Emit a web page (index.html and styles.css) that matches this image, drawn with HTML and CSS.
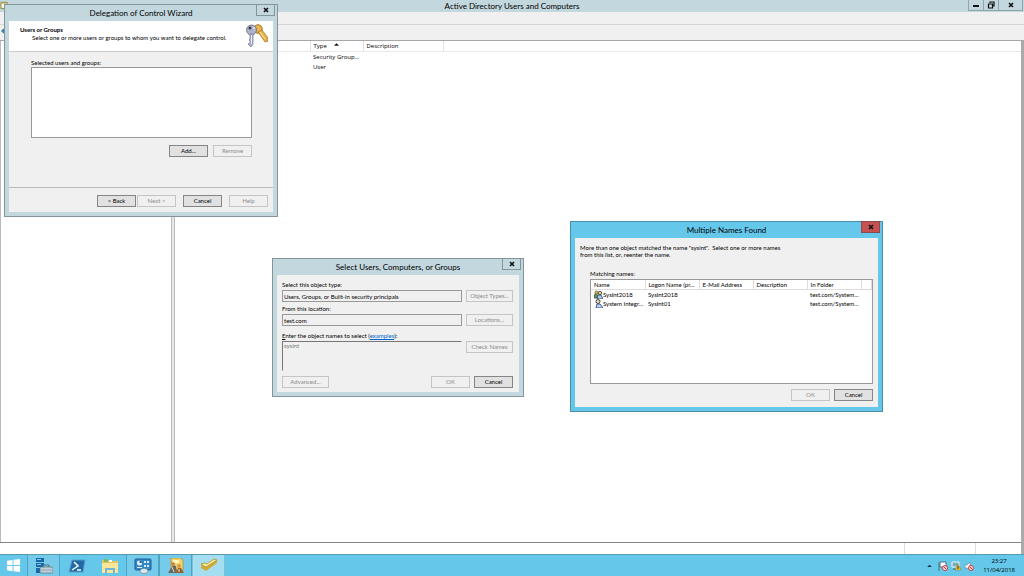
FILE: index.html
```html
<!DOCTYPE html>
<html lang="en">
<head>
<meta charset="utf-8">
<title>Active Directory Users and Computers</title>
<link rel="stylesheet" href="styles.css">
</head>
<body>
<div class="desktop">
  <main class="console">
    <header class="console-title">
      <svg class="app-icon" viewBox="0 0 10 10" aria-hidden="true"><path d="M1 2h7v7H1z" fill="#d8cc7a" stroke="#8f8b4e"/><path d="M2 4h5v4H2z" fill="#fff"/></svg>
      <h1>Active Directory Users and Computers</h1>
      <div class="caption-buttons">
        <button type="button" aria-label="Minimize"><svg viewBox="0 0 10 10"><path d="M2 6h6" stroke="#111" stroke-width="2"/></svg></button>
        <button type="button" aria-label="Restore"><svg viewBox="0 0 10 10"><path d="M4 3V2h4v4H7M2.500 4h4v4h-4z" fill="none" stroke="#111" stroke-width="1.200"/></svg></button>
        <button type="button" class="wide" aria-label="Close"><svg viewBox="0 0 10 10"><path d="M3 3l4 4M7 3L3 7" stroke="#111" stroke-width="1.600"/></svg></button>
      </div>
    </header>
    <div class="menubar"></div>
    <div class="toolbar"><svg class="back-icon" viewBox="0 0 8 8" aria-hidden="true"><path d="M7 4H2M4 2L2 4l2 2" fill="none" stroke="#3f87a8" stroke-width="1.500"/></svg></div>
    <div class="panes">
      <nav class="tree" aria-label="Console tree"></nav>
      <section class="listing">
        <table class="objects">
          <colgroup><col class="c-name"><col class="c-type"><col class="c-desc"><col></colgroup>
          <thead><tr><th></th><th>Type<svg class="sort" viewBox="0 0 6 3" aria-hidden="true"><path d="M0 3l3-3 3 3z" fill="#111"/></svg></th><th>Description</th><th></th></tr></thead>
          <tbody>
            <tr><td></td><td>Security Group...</td><td></td><td></td></tr>
            <tr><td></td><td>User</td><td></td><td></td></tr>
          </tbody>
        </table>
      </section>
    </div>
    <footer class="statusbar"><span class="grow"></span><span class="cell-a"></span><span class="cell-b"></span></footer>
  </main>

  <nav class="taskbar" aria-label="Taskbar">
    <button type="button" class="start" aria-label="Start"><svg viewBox="0 0 16 16"><path d="M1 3l6-1v5.500H1zM8 1.900L15 1v6.500H8zM1 8.500h6V14l-6-1zM8 8.500h7V15l-7-.9z" fill="#fff"/></svg></button>
    <button type="button" class="task open" aria-label="Server Manager"><svg viewBox="0 0 18 16"><path d="M1 0h8v4H1zM1 5h8v4H1zM1 10h5v5H1z" fill="#1668a6"/><path d="M2 1h4v1H2zM2 6h4v1H2z" fill="#8cc6ea"/><path d="M8 9V7h6v2" fill="none" stroke="#58707d"/><rect x="5" y="9" width="13" height="6" rx="1" fill="#c3d2da" stroke="#58707d" stroke-width=".7"/><path d="M5 12h13" stroke="#8fa3ae"/></svg></button>
    <button type="button" class="task" aria-label="PowerShell"><svg viewBox="0 0 18 16"><path d="M4 2h13l-2 12H1z" fill="#226aa4" stroke="#5ba0ca"/><path d="M6 4l4 4-6 4M9 12h4" fill="none" stroke="#fff" stroke-width="1.500"/></svg></button>
    <button type="button" class="task" aria-label="File Explorer"><svg viewBox="0 0 18 16"><path d="M1 2h6l1 1h9v12H1z" fill="#e3c45f"/><path d="M3 1h4v3H3z" fill="#7eb963"/><path d="M8 2h3v2H8z" fill="#fff"/><path d="M1 5h16v10H1z" fill="#f8e69b"/><path d="M5 15v-4h8v4" fill="none" stroke="#76b5d4" stroke-width="2"/></svg></button>
    <button type="button" class="task open" aria-label="Control Panel"><svg viewBox="0 0 18 16"><rect x="1" y="1" width="16" height="11" rx="1" fill="#3588c4" stroke="#185f96"/><circle cx="5.500" cy="5" r="2.500" fill="#e6f4fc"/><path d="M5.500 5V2.500A2.500 2.500 0 018 5z" fill="#2569a0"/><path d="M10 3h2v2h-2zM13 3h2v2h-2zM10 7h2v2h-2zM13 7h2v2h-2zM3 9h5v1H3z" fill="#d1edfb"/><ellipse cx="10" cy="13" rx="4" ry="2.500" fill="#e2e8e8" stroke="#68889a" stroke-width=".7"/></svg></button>
    <button type="button" class="task open" aria-label="Active Directory"><svg viewBox="0 0 18 16"><path d="M4 0h10l2 3v9H4z" fill="#f2d568" stroke="#a98b2e" stroke-width=".7"/><path d="M6 2h6v3H6z" fill="#fff5bd"/><path d="M1 15l3-5 2-3 3 1 1 7z" fill="#6e6758"/><circle cx="6" cy="6" r="2" fill="#c58c4f"/><circle cx="12" cy="8" r="2" fill="#d49a55"/><path d="M9 15l2-5h3l3 5z" fill="#9b5f27"/><path d="M5 9l2 5M12 11v3" stroke="#e8e2d0"/></svg></button>
    <button type="button" class="task current" aria-label="Directory Console"><svg viewBox="0 0 18 16"><path d="M1 7l5 2 11-7v3L6 13l-5-3z" fill="#d1ac32"/><path d="M1 6l4-1 2 1 7-5 3 1L6 9z" fill="#fff19c" stroke="#b28c29" stroke-width=".8"/></svg></button>
    <div class="tray">
      <svg class="tray-up" viewBox="0 0 6 4" aria-hidden="true"><path d="M0 4l3-3 3 3z" fill="#122e3c"/></svg>
      <svg class="tray-icon" viewBox="0 0 10 10" aria-label="Action Center"><path d="M1 1v9M2 1h6v5H2z" fill="#fff" stroke="#53727f"/><circle cx="7" cy="7" r="2.500" fill="#f4dede" stroke="#d23c3c"/><path d="M5.500 5.500l3 3" stroke="#d23c3c"/></svg>
      <svg class="tray-icon" viewBox="0 0 10 10" aria-label="Network"><path d="M1 1h7v5H1z" fill="#7bacbc" stroke="#eef8fb"/><path d="M2 8h5" stroke="#48626e"/><path d="M7 3l3 6H4z" fill="#f3ca36" stroke="#957018" stroke-width=".5"/><path d="M7 5v3" stroke="#332b10"/></svg>
      <svg class="tray-icon" viewBox="0 0 10 10" aria-label="Volume"><path d="M1 4h2l3-3v8L3 7H1z" fill="#fff" stroke="#65808a" stroke-width=".6"/><circle cx="7" cy="7" r="2.500" fill="#f4dede" stroke="#d23c3c"/><path d="M5.500 5.500l3 3" stroke="#d23c3c"/></svg>
      <div class="clock"><time>23:27</time><time>11/04/2018</time></div>
    </div>
  </nav>

  <section class="window wizard" role="dialog" aria-labelledby="wizard-title">
    <header class="window-title"><h2 id="wizard-title">Delegation of Control Wizard</h2><button type="button" class="close" aria-label="Close"><svg viewBox="0 0 10 10"><path d="M3 3l4 4M7 3L3 7" stroke="#111" stroke-width="1.600"/></svg></button></header>
    <div class="window-body">
      <div class="banner">
        <div class="banner-text"><h3>Users or Groups</h3><p>Select one or more users or groups to whom you want to delegate control.</p></div>
        <svg class="keys" viewBox="0 0 22 24" aria-hidden="true"><circle cx="12" cy="5" r="4.200" fill="#eab74c" stroke="#a46e20"/><path d="M12 8l7 10 3-1-1-2 1-1-6-8z" fill="#e7b349" stroke="#a46e20" stroke-width=".7"/><path d="M14 8l5 7" stroke="#fae6a1"/><circle cx="5.500" cy="6" r="5" fill="#aeb3ca" stroke="#646982" stroke-width=".8"/><circle cx="4" cy="4" r="1.500" fill="#33374b"/><circle cx="8" cy="4" r="1" fill="#eceffb"/><path d="M4 10h3v10l-2 3-1-1-2-2 2-1v-2l-1-1 1-1z" fill="#afb5d0" stroke="#6d738f" stroke-width=".7"/><path d="M5.500 11v9" stroke="#eef0fa"/></svg>
      </div>
      <div class="wizard-page">
        <label for="selected">Selected users and groups:</label>
        <select id="selected" class="selected" size="4"></select>
        <div class="actions"><button type="button" class="btn">Add...</button><button type="button" class="btn" disabled>Remove</button></div>
      </div>
      <footer class="wizard-footer">
        <div class="pair"><button type="button" class="btn">&lt; Back</button><button type="button" class="btn" disabled>Next &gt;</button></div>
        <button type="button" class="btn">Cancel</button>
        <button type="button" class="btn" disabled>Help</button>
      </footer>
    </div>
  </section>

  <section class="window picker" role="dialog" aria-labelledby="picker-title">
    <header class="window-title"><h2 id="picker-title">Select Users, Computers, or Groups</h2><button type="button" class="close" aria-label="Close"><svg viewBox="0 0 10 10"><path d="M3 3l4 4M7 3L3 7" stroke="#111" stroke-width="1.600"/></svg></button></header>
    <form class="window-body picker-form">
      <div class="field"><label for="otype">Select this object type:</label><input id="otype" class="text" type="text" readonly value="Users, Groups, or Built-in security principals"><button type="button" class="btn" disabled>Object Types...</button></div>
      <div class="field"><label for="loc">From this location:</label><input id="loc" class="text" type="text" readonly value="test.com"><button type="button" class="btn" disabled>Locations...</button></div>
      <div class="field names"><label for="names"><u>E</u>nter the object names to select (<a href="#">examples</a>):</label><textarea id="names" class="text area" disabled>sysint</textarea><button type="button" class="btn" disabled>Check Names</button></div>
      <div class="picker-actions"><button type="button" class="btn advanced" disabled>Advanced...</button><button type="button" class="btn" disabled>OK</button><button type="button" class="btn">Cancel</button></div>
    </form>
  </section>

  <section class="window matches active" role="dialog" aria-labelledby="matches-title">
    <header class="window-title"><h2 id="matches-title">Multiple Names Found</h2><button type="button" class="close" aria-label="Close"><svg viewBox="0 0 10 10"><path d="M3 3l4 4M7 3L3 7" stroke="#111" stroke-width="1.600"/></svg></button></header>
    <div class="window-body matches-body">
      <p>More than one object matched the name "sysint".&nbsp; Select one or more names<br>from this list, or, reenter the name.</p>
      <div class="matches-main">
        <div id="match-label" class="match-label">Matching names:</div>
        <div class="match-list">
          <table aria-labelledby="match-label">
            <colgroup><col class="m"><col class="m"><col class="m"><col class="m"><col class="m"><col></colgroup>
            <thead><tr><th>Name</th><th>Logon Name (pr...</th><th>E-Mail Address</th><th>Description</th><th>In Folder</th><th></th></tr></thead>
            <tbody>
              <tr><td class="named"><svg viewBox="0 0 9 9" aria-hidden="true"><circle cx="2.500" cy="2.500" r="1.500" fill="#e3c44d" stroke="#514a21" stroke-width=".7"/><path d="M0 8V5l2-1 3 2v2z" fill="#55a04c" stroke="#284a2d" stroke-width=".7"/><circle cx="6" cy="3" r="1.700" fill="#e9d98d" stroke="#333" stroke-width=".8"/><path d="M3 9l1-4h3l2 4z" fill="#b5c8e8" stroke="#213c75" stroke-width=".8"/></svg>SysInt2018</td><td>SysInt2018</td><td></td><td></td><td>test.com/System...</td><td></td></tr>
              <tr><td class="named"><svg viewBox="0 0 9 9" aria-hidden="true"><circle cx="4" cy="2.500" r="2" fill="#f0dfb4" stroke="#333" stroke-width=".9"/><path d="M2 9l1-4h3l3 4z" fill="#c2d4ef" stroke="#294989" stroke-width=".9"/></svg>System Integr...</td><td>SysInt01</td><td></td><td></td><td>test.com/System...</td><td></td></tr>
            </tbody>
          </table>
        </div>
        <div class="match-actions"><button type="button" class="btn" disabled>OK</button><button type="button" class="btn">Cancel</button></div>
      </div>
    </div>
  </section>
</div>
</body>
</html>
```

FILE: styles.css
```css
* { box-sizing: border-box; }
body { margin: 0; font: 6px/8px Lato, "Liberation Sans", Arial, sans-serif; color: #000; }
h1, h2, h3, p { margin: 0; }
button, input, textarea, select { font: inherit; color: inherit; margin: 0; border-radius: 0; }
button { padding: 0; }
svg { display: block; flex: none; }
table { width: 100%; border-collapse: collapse; table-layout: fixed; }
th, td { padding: 0 0 0 3px; text-align: left; font-weight: 400; white-space: nowrap; }

.desktop { position: relative; height: 100vh; overflow: hidden; display: flex; flex-direction: column; background: #fff; }

/* Console window */
.console { flex: 1; min-height: 0; display: flex; flex-direction: column; border-right: 3px solid #aaa; }
.console-title { display: grid; grid-template-columns: 1fr auto 1fr; height: 12px; background: #c3d7de; margin-right: -3px; }
.app-icon { width: 9px; height: 10px; }
h1, h2 { font: 400 8px/12px Lato, "Open Sans", sans-serif; }
.caption-buttons { justify-self: end; display: flex; height: 11px; margin-right: 1px; border: 1px solid #8fa4ac; border-top: 0; }
.caption-buttons button { width: 15px; border: 0; border-right: 1px solid #8fa4ac; background: none; display: grid; place-items: center; }
.caption-buttons button.wide { width: 23px; border-right: 0; }
.caption-buttons svg, .close svg { width: 10px; height: 10px; }
.menubar { height: 13px; background: #f0f0f0; border-bottom: 1px solid #d5d5d5; margin-right: -3px; }
.toolbar { height: 16px; background: #f0f0f0; border-bottom: 1px solid #a7a7a7; margin-right: -3px; padding-top: 2px; }
.back-icon { width: 8px; height: 8px; }
.panes { flex: 1; min-height: 0; display: grid; grid-template-columns: 172px 1fr; }
.tree { border: 1px solid #bbb; border-width: 0 1px 0 1px; }
.listing { margin-left: 2px; border-left: 1px solid #bbb; box-shadow: -2px 0 #e8e8e8; }
.objects { font: 6px/10px "Open Sans", "Noto Sans", sans-serif; }
.objects th { border-right: 1px solid #e2e2e2; border-bottom: 1px solid #e9e9e9; position: relative; }
.objects th:last-child { border-right: 0; }
.c-name { width: 135px; }
.c-type { width: 53px; }
.c-desc { width: 80px; }
.sort { position: absolute; left: 23px; top: 2px; width: 5px; height: 3px; }
.statusbar { height: 12px; border-top: 1px solid #858585; display: flex; }
.grow { flex: 1; }
.cell-a { width: 71px; border-left: 1px solid #ddd; }
.cell-b { width: 46px; border-left: 1px solid #ddd; }

/* Taskbar */
.taskbar { height: 22px; display: flex; background: #65c7ea; border-top: 1px solid #5699b0; }
.taskbar button { border: 0; background: none; display: grid; place-items: center; }
.start { width: 27px; }
.start svg { width: 15px; height: 15px; }
.task { width: 33px; }
.task svg { width: 18px; height: 16px; }
.taskbar .open { background: #75cbe9; border: 1px solid #4ca4c4; border-width: 0 1px; }
.taskbar .current { background: #a5def0; border: 1px solid #80bfd4; border-width: 0 1px; }
.tray { margin-left: auto; display: flex; align-items: center; gap: 3px; padding-right: 9px; }
.tray-up { width: 5px; height: 3px; margin-right: 3px; }
.tray-icon { width: 10px; height: 10px; }
.clock { margin-left: 6px; display: flex; flex-direction: column; text-align: center; font: 6px/9px "Open Sans", "Noto Sans", sans-serif; }

/* Dialog frame */
.window { position: absolute; padding: 0 4px 4px; background: #c3d7de; border: 1px solid #83949b; display: flex; flex-direction: column; }
.window-title { position: relative; height: 16px; padding-top: 2px; text-align: center; }
.close { position: absolute; right: -2px; top: -1px; width: 19px; height: 12px; border: 1px solid #83949b; background: none; display: grid; place-items: center; }
.window-body { flex: 1; background: #f0f0f0; }
.active { background: #65c7ea; border-color: #4a8fa9; }
.active .close { background: #c75050; border-color: #8d4a4e; }
.btn { width: 39px; height: 12px; line-height: 10px; border: 1px solid #858585; background: #e1e1e1; text-align: center; }
.btn:disabled { border-color: #c5c5c5; background: #f0f0f0; color: #8c8c8c; }

/* Delegation wizard */
.wizard { left: 4px; top: 4px; width: 274px; height: 213px; }
.wizard .window-body { display: flex; flex-direction: column; }
.banner { display: flex; justify-content: space-between; height: 31px; padding: 5px 5px 0 11px; background: #fff; border-bottom: 1px solid #ccc; }
.banner-text h3 { font-size: 6px; line-height: 8px; }
.banner-text p { padding-left: 12px; }
.keys { width: 22px; height: 24px; margin-top: -2px; }
.wizard-page { flex: 1; display: flex; flex-direction: column; padding: 7px 21px 0 22px; }
.selected { height: 71px; width: 100%; border: 1px solid #999; background: #fff; outline: 0; overflow: hidden; }
.actions { display: flex; justify-content: flex-end; gap: 5px; margin-top: 7px; }
.wizard-footer { display: flex; justify-content: flex-end; gap: 7px; height: 25px; padding: 7px 5px 0 0; border-top: 1px solid #bbb; }
.pair { display: flex; gap: 1px; }

/* Object picker */
.picker { left: 272px; top: 258px; width: 252px; height: 139px; }
.picker-form { display: flex; flex-direction: column; padding: 6px 6px 0 5px; }
.field { display: grid; grid-template-columns: 1fr 47px; column-gap: 4px; row-gap: 1px; margin-bottom: 3px; }
.field label { grid-column: 1 / -1; line-height: 8px; }
.field .btn { width: 47px; }
.names { margin-top: 3px; margin-bottom: 5px; }
.text { width: 100%; height: 12px; padding: 0 1px; border: 1px solid #999; background: #f0f0f0; outline: 0; }
.area { display: block; height: 30px; resize: none; border-color: #777 #f0f0f0 #f0f0f0 #777; color: #777; overflow: hidden; }
.field a { color: #06c; }
.picker-actions { display: flex; gap: 4px; }
.advanced { width: 47px; margin-right: auto; }

/* Name matches */
.matches { left: 570px; top: 221px; width: 313px; height: 191px; }
.matches-body { padding: 6px 5px 0; line-height: 7px; }
.matches-main { padding-left: 10px; margin-top: 12px; }
.match-label { line-height: 8px; }
.match-list { height: 105px; border: 1px solid #999; background: #fff; margin-top: 1px; overflow: hidden; }
.match-list th { line-height: 9px; border-right: 1px solid #ddd; border-bottom: 1px solid #ddd; }
.match-list td { line-height: 9px; }
.m { width: 54px; }
.match-list .named { position: relative; padding-left: 12px; }
.named svg { position: absolute; left: 3px; top: 0; width: 9px; height: 9px; }
.match-actions { display: flex; justify-content: flex-end; gap: 4px; margin-top: 5px; }
```
